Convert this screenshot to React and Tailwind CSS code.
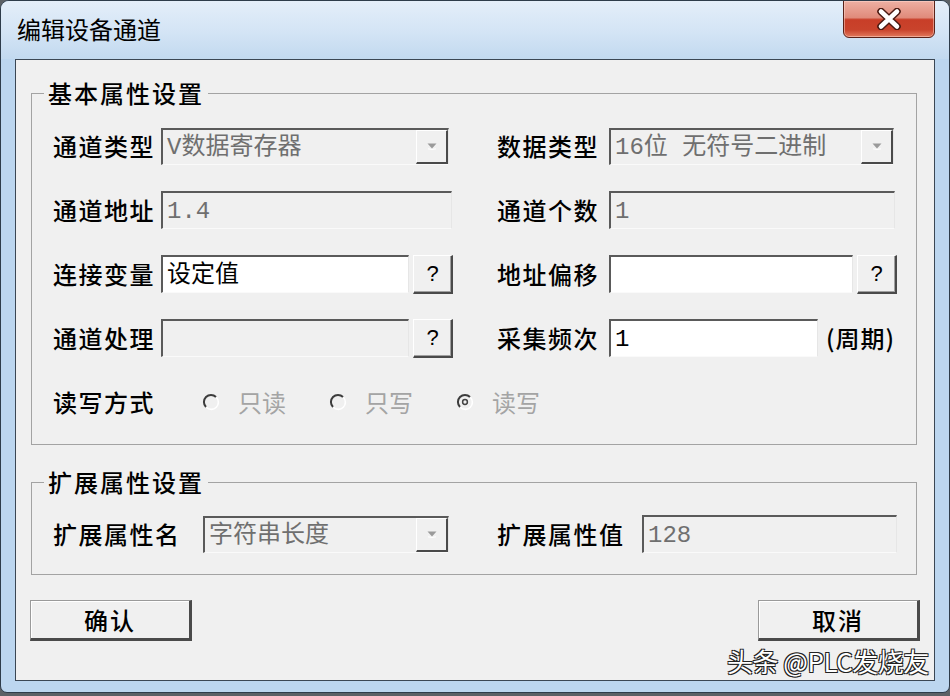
import React from 'react';

const cjk = "font-['Noto_Sans_CJK_SC',sans-serif]";
const mono = "font-['Liberation_Mono','Noto_Sans_CJK_SC',monospace]";

function Field({ width, white, dim, children }) {
  return (
    <div
      className={`${width} h-[38px] flex items-center pl-[4px] pt-[2px] border-t-2 border-l-2 border-b border-r border-t-[#5a5a5a] border-l-[#5a5a5a] border-b-[#fafafa] border-r-[#e6e6e6] text-[24px] leading-none ${mono} ${white ? 'bg-white text-black' : 'bg-[#f0f0f0]'} ${dim ? 'text-[#6f6f6f]' : 'text-black'}`}
    >
      {children}
    </div>
  );
}

function Combo({ width, children }) {
  return (
    <div
      className={`${width} h-[37px] flex items-stretch border-t-2 border-l-2 border-b border-r border-t-[#5a5a5a] border-l-[#5a5a5a] border-b-[#fafafa] border-r-[#e6e6e6] bg-[#f0f0f0]`}
    >
      <div className={`flex-1 flex items-center pl-[4px] pt-[2px] text-[24px] leading-none text-[#6f6f6f] ${mono}`}>
        {children}
      </div>
      <div className="w-[32px] flex items-center justify-center border-t border-l border-t-[#ffffff] border-l-[#ffffff] border-b-2 border-r-2 border-b-[#4a4a4a] border-r-[#4a4a4a] bg-[#f0f0f0]">
        <svg width="12" height="8" viewBox="0 0 12 8">
          <path d="M1.5 1.5 L10.5 1.5 L6 6.5 Z" fill="#9a9a9a" />
          <path d="M2 6.8 L6 7.5 L10 6.8" stroke="#ffffff" strokeWidth="1" fill="none" />
        </svg>
      </div>
    </div>
  );
}

function Ask() {
  return (
    <button className="w-[40px] h-[39px] ml-[4px] flex items-center justify-center bg-[#f0f0f0] border-t border-l border-t-[#ffffff] border-l-[#ffffff] border-b-2 border-r-2 border-b-[#4a4a4a] border-r-[#4a4a4a] shadow-[inset_-1px_-1px_0_#a0a0a0] text-[22px] leading-none text-black font-['Liberation_Sans',sans-serif]">
      ?
    </button>
  );
}

function Radio({ label, checked }) {
  return (
    <div className="w-[127px] flex items-center">
      <svg width="18" height="18" viewBox="0 0 18 18" className="shrink-0">
        <path d="M14 4 A7 7 0 1 0 4 14" stroke="#3c3c3c" strokeWidth="2" fill="none" />
        <path d="M14.3 4.3 A7 7 0 0 1 4.3 14.3" stroke="#ffffff" strokeWidth="1.6" fill="none" />
        {checked && <circle cx="9" cy="9" r="2.4" stroke="#444444" strokeWidth="1.5" fill="none" />}
      </svg>
      <span className="ml-[18px] text-[24px] leading-none text-[#a4a4a4]">{label}</span>
    </div>
  );
}

function Label({ width, children }) {
  return (
    <span className={`${width} text-[24px] leading-none tracking-[1.5px] text-black font-medium`}>{children}</span>
  );
}

function Group({ title, className, children }) {
  return (
    <fieldset className={`ml-[15px] mr-[17px] border border-[#a3a3a3] pl-[12px] ${className}`}>
      <legend className="px-[4px] text-[24px] leading-[30px] tracking-[2px] text-black font-medium">{title}</legend>
      {children}
    </fieldset>
  );
}

function PushButton({ children }) {
  return (
    <button className="w-[162px] h-[41px] flex items-center justify-center bg-[#f0f0f0] border-t border-l border-t-[#9a9a9a] border-l-[#9a9a9a] border-b-[3px] border-r-[3px] border-b-[#4a4a4a] border-r-[#4a4a4a] shadow-[inset_1px_1px_0_#ffffff] text-[24px] leading-none tracking-[2px] text-black font-medium">
      {children}
    </button>
  );
}

export default function App() {
  return (
    <div className={`relative w-[950px] h-[696px] bg-[#5c6166] overflow-hidden ${cjk}`}>
      <div className="w-[950px] h-[693px] flex flex-col border border-[#2e3c4a] rounded-t-[9px] rounded-b-[7px] bg-[#bcd6ef] overflow-hidden">
        {/* title bar */}
        <div className="h-[58px] flex justify-between items-start bg-[linear-gradient(180deg,#e4eef9_0%,#d3e4f5_55%,#c2d9ef_100%)]">
          <div className="pl-[16px] pt-[13px] text-[24px] leading-[30px] text-black">编辑设备通道</div>
          <div className="-mt-px mr-[14px] w-[92px] h-[38px] flex items-center justify-center rounded-b-[6px] border border-[#5b2219] bg-[linear-gradient(180deg,#eeb0a3_0%,#e08b7b_46%,#c83e28_52%,#c9432c_80%,#e27a5d_100%)] shadow-[inset_0_0_0_1px_rgba(255,220,210,0.5)]">
            <svg width="26" height="22" viewBox="0 0 26 22">
              <path d="M5 3.5 L21 18.5 M21 3.5 L5 18.5" stroke="#4b1a12" strokeWidth="7.5" strokeLinecap="round" />
              <path d="M5 3.5 L21 18.5 M21 3.5 L5 18.5" stroke="#ffffff" strokeWidth="4.5" strokeLinecap="round" />
            </svg>
          </div>
        </div>

        {/* client area */}
        <div className="mx-[14px] h-[622px] flex flex-col pt-[18px] border border-[#3b4754] bg-[#f0f0f0]">
          <Group title="基本属性设置" className="pb-[23px]">
            <div className="mt-[19px] ml-[9px] flex flex-col gap-[26px]">
              <div className="h-[38px] flex items-center">
                <div className="w-[444px] flex items-center">
                  <Label width="w-[108px]">通道类型</Label>
                  <Combo width="w-[288px]">V数据寄存器</Combo>
                </div>
                <div className="flex items-center">
                  <Label width="w-[112px]">数据类型</Label>
                  <Combo width="w-[285px]">16位 无符号二进制</Combo>
                </div>
              </div>

              <div className="h-[38px] flex items-center">
                <div className="w-[444px] flex items-center">
                  <Label width="w-[108px]">通道地址</Label>
                  <Field width="w-[291px]" dim>1.4</Field>
                </div>
                <div className="flex items-center">
                  <Label width="w-[112px]">通道个数</Label>
                  <Field width="w-[286px]" dim>1</Field>
                </div>
              </div>

              <div className="h-[38px] flex items-center">
                <div className="w-[444px] flex items-center">
                  <Label width="w-[108px]">连接变量</Label>
                  <Field width="w-[248px]" white>设定值</Field>
                  <Ask />
                </div>
                <div className="flex items-center">
                  <Label width="w-[112px]">地址偏移</Label>
                  <Field width="w-[244px]" white></Field>
                  <Ask />
                </div>
              </div>

              <div className="h-[38px] flex items-center">
                <div className="w-[444px] flex items-center">
                  <Label width="w-[108px]">通道处理</Label>
                  <Field width="w-[248px]"></Field>
                  <Ask />
                </div>
                <div className="flex items-center">
                  <Label width="w-[112px]">采集频次</Label>
                  <Field width="w-[209px]" white>1</Field>
                  <span className="ml-[8px] text-[24px] leading-none tracking-[1px] text-black font-medium">(周期)</span>
                </div>
              </div>

              <div className="h-[38px] flex items-center">
                <Label width="w-[108px]">读写方式</Label>
                <div className="ml-[41px] flex items-center">
                  <Radio label="只读" />
                  <Radio label="只写" />
                  <Radio label="读写" checked />
                </div>
              </div>
            </div>
          </Group>

          <Group title="扩展属性设置" className="mt-[22px] pb-[21px]">
            <div className="mt-[18px] ml-[9px] h-[38px] flex items-center">
              <div className="w-[444px] flex items-center">
                <Label width="w-[150px]">扩展属性名</Label>
                <Combo width="w-[246px]">字符串长度</Combo>
              </div>
              <div className="flex items-center">
                <Label width="w-[145px]">扩展属性值</Label>
                <Field width="w-[255px]" dim>128</Field>
              </div>
            </div>
          </Group>

          <div className="mt-[25px] px-[14px] flex justify-between">
            <PushButton>确认</PushButton>
            <PushButton>取消</PushButton>
          </div>
        </div>
      </div>

      {/* watermark */}
      <div className="absolute left-[727px] top-[643px] text-[26px] leading-[36px] text-white tracking-[-0.5px] [text-shadow:1px_1px_0_#222,-1px_-1px_0_#222,1px_-1px_0_#222,-1px_1px_0_#222]">
        头条 @PLC发烧友
      </div>
    </div>
  );
}
